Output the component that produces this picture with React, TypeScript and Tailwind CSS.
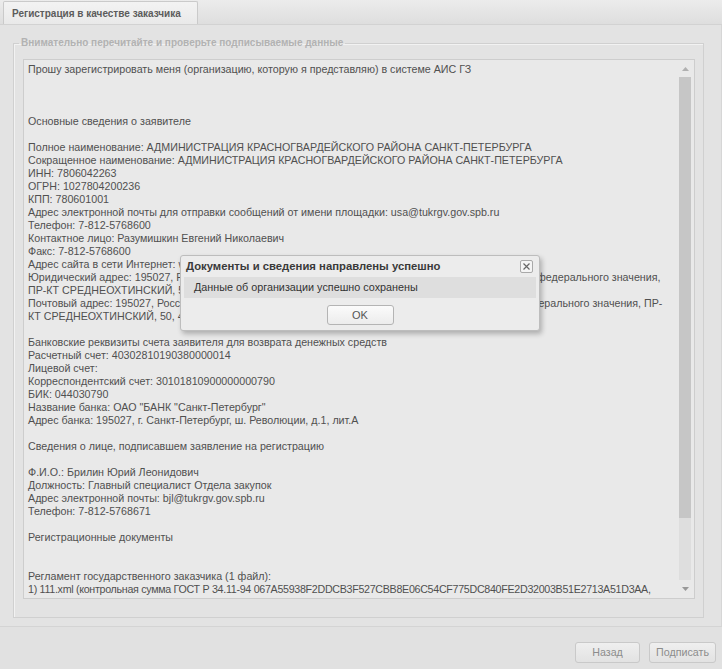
const lines: string[] = [
  'Прошу зарегистрировать меня (организацию, которую я представляю) в системе АИС ГЗ',
  '',
  '',
  '',
  'Основные сведения о заявителе',
  '',
  'Полное наименование: АДМИНИСТРАЦИЯ КРАСНОГВАРДЕЙСКОГО РАЙОНА САНКТ-ПЕТЕРБУРГА',
  'Сокращенное наименование: АДМИНИСТРАЦИЯ КРАСНОГВАРДЕЙСКОГО РАЙОНА САНКТ-ПЕТЕРБУРГА',
  'ИНН: 7806042263',
  'ОГРН: 1027804200236',
  'КПП: 780601001',
  'Адрес электронной почты для отправки сообщений от имени площадки: usa@tukrgv.gov.spb.ru',
  'Телефон: 7-812-5768600',
  'Контактное лицо: Разумишкин Евгений Николаевич',
  'Факс: 7-812-5768600',
  'Адрес сайта в сети Интернет: www.tukrgv.spb.ru',
  'Юридический адрес: 195027, Российская Федерация, г. Санкт-Петербург, Красногвардейский р, город федерального значения,',
  'ПР-КТ СРЕДНЕОХТИНСКИЙ, 50, 40',
  'Почтовый адрес: 195027, Российская Федерация, г. Санкт-Петербург, Красногвардейский р, город федерального значения, ПР-',
  'КТ СРЕДНЕОХТИНСКИЙ, 50, 40',
  '',
  'Банковские реквизиты счета заявителя для возврата денежных средств',
  'Расчетный счет: 40302810190380000014',
  'Лицевой счет:',
  'Корреспондентский счет: 30101810900000000790',
  'БИК: 044030790',
  'Название банка: ОАО "БАНК "Санкт-Петербург"',
  'Адрес банка: 195027, г. Санкт-Петербург, ш. Революции, д.1, лит.А',
  '',
  'Сведения о лице, подписавшем заявление на регистрацию',
  '',
  'Ф.И.О.: Брилин Юрий Леонидович',
  'Должность: Главный специалист Отдела закупок',
  'Адрес электронной почты: bjl@tukrgv.gov.spb.ru',
  'Телефон: 7-812-5768671',
  '',
  'Регистрационные документы',
  '',
  '',
  'Регламент государственного заказчика (1 файл):',
]

const font = { fontFamily: '"Liberation Sans", Arial, sans-serif' }

export default function App() {
  return (
    <div
      className="relative w-[722px] h-[669px] overflow-hidden bg-[#e3e3e3] flex flex-col text-[10.7px]"
      style={font}
    >
      {/* tab strip */}
      <div className="h-[25px] flex items-end pl-[3px] bg-gradient-to-b from-[#ececec] to-[#dedede] border-b border-[#d2d2d2]">
        <div className="h-[23px] w-[195px] flex items-center pl-[8px] whitespace-nowrap bg-gradient-to-b from-[#f3f3f3] to-[#e9e9e9] border border-b-0 border-[#cacaca] rounded-t-[2px] text-[10px] font-bold text-[#5c5c5c]">
          Регистрация в качестве заказчика
        </div>
      </div>

      {/* body */}
      <div className="flex-1 pl-[13px] pr-[17px] pt-[11px] border-r border-[#d6d6d6]">
        <fieldset className="min-w-0 border border-[#d0d0d0] pl-[9px] pr-[8px] pt-[9px] pb-[18px] shadow-[inset_1px_1px_0_#f2f2f2]">
          <legend className="ml-[-4px] px-[2px] leading-[14px] text-[10px] font-bold text-[#b2b2b2]">
            Внимательно перечитайте и проверьте подписываемые данные
          </legend>
          <div className="h-[540px] flex border border-[#cdcdcd] bg-[#e9e9e9]">
            <div className="flex-1 min-w-0 overflow-hidden pl-[4px] pt-[3px] text-[#505050] leading-[13px]">
              {lines.map((l, i) => (
                <div key={i} className="h-[13px] whitespace-nowrap">
                  {l}
                </div>
              ))}
              <div className="h-[13px] whitespace-nowrap tracking-[-0.3px]">
                1) 111.xml (контрольная сумма ГОСТ Р 34.11-94 067A55938F2DDCB3F527CBB8E06C54CF775DC840FE2D32003B51E2713A51D3AA,
              </div>
            </div>
            <div className="w-[14px] shrink-0 mr-[2px] flex flex-col">
              <div className="h-[17px] shrink-0 flex items-center justify-center">
                <svg width="7" height="4" viewBox="0 0 7 4">
                  <path d="M0 4 L3.5 0 L7 4 Z" fill="#b0b0b0" />
                </svg>
              </div>
              <div className="h-[441px] shrink-0 mx-[1px] bg-[#c6c6c6]" />
              <div className="h-[62px] shrink-0 mx-[1px] bg-[#dedede]" />
              <div className="h-[18px] shrink-0 flex items-center justify-center">
                <svg width="7" height="4" viewBox="0 0 7 4">
                  <path d="M0 0 L7 0 L3.5 4 Z" fill="#999999" />
                </svg>
              </div>
            </div>
          </div>
        </fieldset>
      </div>

      {/* toolbar */}
      <div className="h-[43px] flex items-start justify-end gap-[9px] pt-[15px] pr-[6px] border-t border-[#d4d4d4] bg-[#e1e1e1]">
        <button className="h-[21px] w-[65px] rounded-[3px] border border-[#c9c9c9] bg-gradient-to-b from-[#efefef] to-[#e2e2e2] text-[#8c8c8c]">
          Назад
        </button>
        <button className="h-[21px] w-[67px] rounded-[3px] border border-[#c9c9c9] bg-gradient-to-b from-[#efefef] to-[#e2e2e2] text-[#8c8c8c]">
          Подписать
        </button>
      </div>

      {/* message box */}
      <div className="absolute left-[180px] top-[255px] w-[360px] rounded-[3px] border border-[#bdbdbd] bg-[#ececec] shadow-[2px_3px_5px_rgba(0,0,0,0.25)] px-[3px] pb-[5px]">
        <div className="h-[21px] flex items-center justify-between pl-[2px] pr-[3px]">
          <span className="text-[11.3px] font-bold text-[#3a3a3a]">
            Документы и сведения направлены успешно
          </span>
          <div className="w-[13px] h-[13px] rounded-[2px] border border-[#a9a9a9] bg-[#f4f4f4] flex items-center justify-center">
            <svg width="7" height="7" viewBox="0 0 7 7">
              <path d="M0.5 0.5 L6.5 6.5 M6.5 0.5 L0.5 6.5" stroke="#666" strokeWidth="1.2" />
            </svg>
          </div>
        </div>
        <div className="h-[21px] flex items-center pl-[10px] bg-[#dedede] text-[10.8px] text-[#333]">
          Данные об организации успешно сохранены
        </div>
        <div className="flex justify-center pt-[7px]">
          <button className="h-[20px] w-[67px] rounded-[3px] border border-[#b4b4b4] bg-gradient-to-b from-[#fbfbfb] to-[#ececec] text-[11px] text-[#555]">
            OK
          </button>
        </div>
      </div>
    </div>
  )
}
